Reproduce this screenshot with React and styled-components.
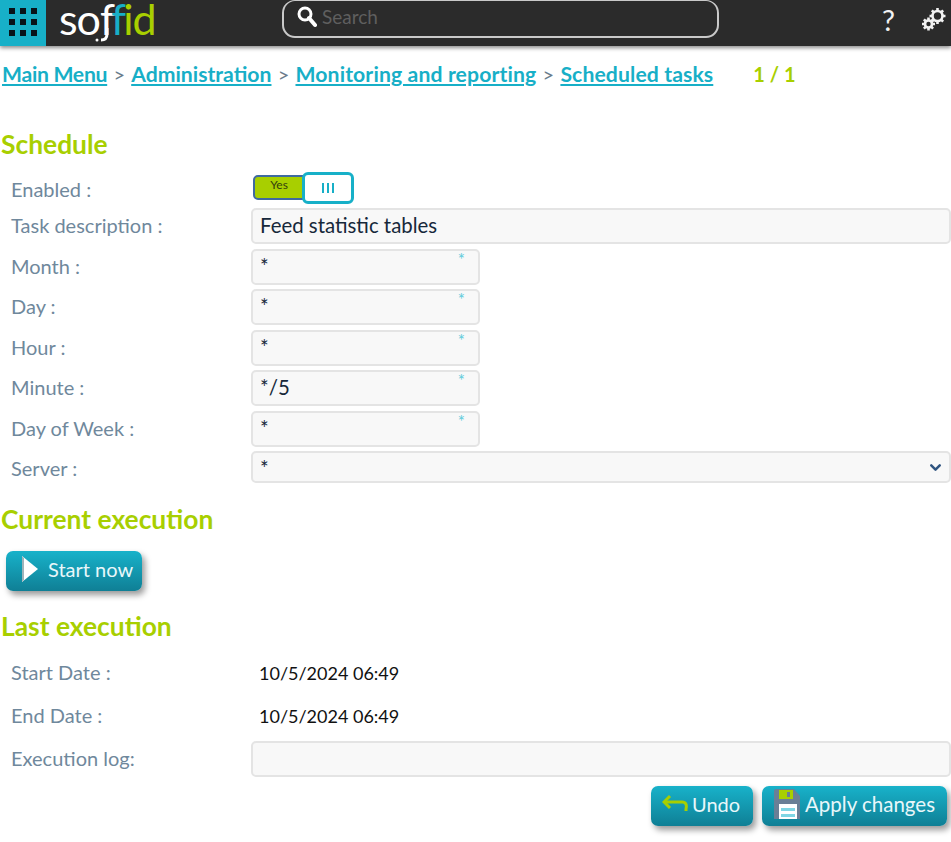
import React from 'react'
import styled, { createGlobalStyle } from 'styled-components'
import { ChevronDown } from 'lucide-react'

const GlobalStyle = createGlobalStyle`
  html, body {
    margin: 0;
    padding: 0;
    background: #fff;
    font-family: 'Lato', 'Open Sans', sans-serif;
  }
  * {
    box-sizing: border-box;
  }
`

const Page = styled.div`
  width: 951px;
  height: 842px;
  overflow: hidden;
`

const Header = styled.header`
  display: flex;
  align-items: flex-start;
  height: 46px;
  background: #2b2b2b;
  box-shadow: 0 2px 4px rgba(0, 0, 0, 0.45);
`

const MenuButton = styled.div`
  display: grid;
  grid-template-columns: repeat(3, 6px);
  grid-auto-rows: 6px;
  gap: 5px;
  align-content: center;
  justify-content: center;
  width: 46px;
  height: 46px;
  padding-bottom: 3px;
  background: #17b0c8;
`

const Dot = styled.span`
  background: #08141a;
`

const Logo = styled.div`
  position: relative;
  display: flex;
  width: 96px;
  height: 46px;
  margin-left: 13px;
  font-size: 43px;
  font-weight: 400;
  line-height: 38px;
`

const LogoPart = styled.span`
  color: ${(p) => p.$color};
  letter-spacing: ${(p) => p.$spacing}px;
`

const LogoHook = styled.svg`
  position: absolute;
  left: 33px;
  top: 28px;
`

const SearchBox = styled.div`
  display: flex;
  align-items: center;
  gap: 5px;
  width: 437px;
  height: 38px;
  margin-left: 127px;
  padding: 0 0 4px 13px;
  border: 2px solid #c9c9c9;
  border-top-width: 1px;
  border-radius: 13px;
  color: #5f5f5f;
  font-size: 19px;
`

const HeaderIcons = styled.div`
  display: flex;
  align-items: center;
  gap: 27px;
  margin-left: auto;
  height: 38px;
  padding-right: 5px;
  color: #f2f2f2;
`

const HelpMark = styled.span`
  font-size: 29px;
  font-weight: 400;
  line-height: 1;
`

const Breadcrumbs = styled.nav`
  display: flex;
  align-items: center;
  height: 24px;
  margin: 16px 0 0 2px;
  font-size: 20px;
  color: #6b7c8c;
  white-space: pre;
`

const Crumb = styled.a`
  color: #17afc7;
  font-size: 21.2px;
  font-weight: 700;
  letter-spacing: ${(p) => p.$spacing}px;
  text-decoration: underline;
`

const Separator = styled.span`
  width: 24px;
  text-align: center;
`

const Counter = styled.span`
  margin-left: 40px;
  color: #a8cf00;
  font-weight: 700;
`

const SectionTitle = styled.h2`
  height: 30px;
  margin: ${(p) => p.$top}px 0 0 1px;
  color: #a8cf00;
  font-size: 26.4px;
  font-weight: 700;
  line-height: 28px;
`

const Form = styled.div`
  display: flex;
  flex-direction: column;
`

const Row = styled.div`
  display: grid;
  grid-template-columns: 251px 1fr;
  align-items: center;
  height: ${(p) => p.$height}px;
  margin-top: ${(p) => p.$top || 0}px;
`

const Label = styled.label`
  padding: ${(p) => (p.$low ? '1px 0 0 11px' : '0 0 2px 11px')};
  color: #6f889c;
  font-size: 20px;
`

const Switch = styled.div`
  display: flex;
  align-items: center;
  align-self: start;
  margin-left: 2px;
`

const SwitchOn = styled.div`
  display: flex;
  justify-content: center;
  width: 52px;
  height: 25px;
  margin-bottom: 1px;
  background: #a8cf00;
  border: 2px solid #3f6aa0;
  border-radius: 5px 0 0 5px;
  color: #34400e;
  font-size: 12px;
`

const SwitchHandle = styled.div`
  display: flex;
  align-items: center;
  justify-content: center;
  gap: 3px;
  width: 52px;
  height: 32px;
  margin-left: -3px;
  background: #fff;
  border: 3px solid #17b0c8;
  border-radius: 6px;
`

const Grip = styled.span`
  width: 2px;
  height: 10px;
  background: #17afc7;
`

const Field = styled.div`
  position: relative;
  width: ${(p) => p.$width || '700px'};
  height: ${(p) => p.$height || 36}px;
  padding: 1px 7px 0;
  background: #f8f8f8;
  border: 2px solid #e4e4e4;
  border-radius: 5px;
  color: #16283a;
  font-size: 20.4px;
  line-height: 28px;
`

const Required = styled.span`
  position: absolute;
  top: 1px;
  right: 13px;
  color: #62cbdb;
  font-size: 17px;
  line-height: 16px;
`

const Chevron = styled(ChevronDown)`
  position: absolute;
  top: 6px;
  right: 5px;
  color: #2f5480;
`

const Value = styled.span`
  padding-left: 8px;
  color: #111;
  font-size: 18px;
`

const Button = styled.button`
  display: flex;
  align-items: center;
  gap: ${(p) => p.$gap}px;
  width: ${(p) => p.$width}px;
  height: 40px;
  padding: 0 0 4px ${(p) => p.$pad}px;
  background: linear-gradient(#18b2ca, #0f7f95);
  border: none;
  border-radius: 7px;
  box-shadow: 3px 4px 6px rgba(0, 0, 0, 0.4);
  color: #e8f7fa;
  font-family: inherit;
  font-size: ${(p) => p.$size || 20}px;
  font-weight: 400;
`

const StartRow = styled.div`
  display: flex;
  margin: 16px 0 0 6px;
`

const Footer = styled.div`
  display: flex;
  justify-content: flex-end;
  gap: 9px;
  margin-top: 9px;
  padding-right: 4px;
`

const PlayIcon = () => (
  <svg width="18" height="26" viewBox="0 0 18 26">
    <path d="M1 0 L17 13 L1 26 Z" fill="#fff" />
    <path d="M1 0 L3 2 L3 24 L1 26 Z" fill="#9fb4ba" />
  </svg>
)

const UndoIcon = () => (
  <svg width="26" height="20" viewBox="0 0 26 20" fill="none" stroke="#a8cf00" strokeWidth="3">
    <path d="M8 2 L2 8 L8 14" />
    <path d="M2 8 H20 C24 8 25 11 24 15 V17" />
  </svg>
)

const SaveIcon = () => (
  <svg width="26" height="30" viewBox="0 0 26 30">
    <path d="M0 2 Q0 0 2 0 H20 L26 7 V30 H0 Z" fill="#6a7f96" />
    <rect x="5" y="1" width="14" height="9" fill="#a8cf00" />
    <rect x="13" y="3" width="3" height="5" fill="#6a7f96" />
    <rect x="5" y="15" width="18" height="15" fill="#fff" />
    <rect x="7" y="19" width="14" height="3" fill="#7fd6e4" />
    <rect x="7" y="25" width="14" height="3" fill="#7fd6e4" />
  </svg>
)

const SearchIcon = () => (
  <svg width="20" height="22" viewBox="0 0 20 22" fill="none" stroke="#fff">
    <circle cx="8" cy="8" r="6" strokeWidth="3" />
    <path d="M12 12 L18 19" strokeWidth="4" strokeLinecap="round" />
  </svg>
)

const Gear = ({ cx, cy, r }) => {
  const teeth = [0, 45, 90, 135]
  return (
    <g stroke="#f2f2f2" fill="none">
      <circle cx={cx} cy={cy} r={r} strokeWidth="2.6" />
      {teeth.map((a) => (
        <path
          key={a}
          d={`M${cx} ${cy - r - 3} V${cy + r + 3}`}
          strokeWidth="2.6"
          strokeDasharray={`3 ${2 * r} 3`}
          transform={`rotate(${a} ${cx} ${cy})`}
        />
      ))}
    </g>
  )
}

const GearsIcon = () => (
  <svg width="24" height="24" viewBox="0 0 24 24">
    <Gear cx={15.5} cy={9} r={5} />
    <Gear cx={6.5} cy={17} r={3.5} />
  </svg>
)

const fields = [
  { label: 'Month :', value: '*', top: 5 },
  { label: 'Day :', value: '*', top: 4 },
  { label: 'Hour :', value: '*', top: 5 },
  { label: 'Minute :', value: '*/5', top: 4 },
  { label: 'Day of Week :', value: '*', top: 5 },
]

const crumbs = [
  { text: 'Main Menu', spacing: -0.3 },
  { text: 'Administration', spacing: 0 },
  { text: 'Monitoring and reporting', spacing: 0.12 },
  { text: 'Scheduled tasks', spacing: 0.1 },
]

export default function App() {
  return (
    <Page>
      <GlobalStyle />
      <Header>
        <MenuButton>
          {Array.from({ length: 9 }).map((_, i) => (
            <Dot key={i} />
          ))}
        </MenuButton>
        <Logo>
          <LogoPart $color="#fff" $spacing={-1}>so</LogoPart>
          <LogoPart $color="#fff" $spacing={-4}>f</LogoPart>
          <LogoPart $color="#17afc7" $spacing={-3}>f</LogoPart>
          <LogoPart $color="#a8cf00" $spacing={-1}>id</LogoPart>
          <LogoHook width="20" height="16" viewBox="0 0 20 16" fill="none">
            <path d="M15 0 V6 C15 10 13 12 9 12" stroke="#fff" strokeWidth="3" />
            <circle cx="5" cy="12" r="1.5" fill="#fff" />
          </LogoHook>
        </Logo>
        <SearchBox>
          <SearchIcon />
          Search
        </SearchBox>
        <HeaderIcons>
          <HelpMark>?</HelpMark>
          <GearsIcon />
        </HeaderIcons>
      </Header>

      <Breadcrumbs>
        {crumbs.map((c, i) => (
          <React.Fragment key={c.text}>
            {i > 0 && <Separator>&gt;</Separator>}
            <Crumb $spacing={c.spacing}>{c.text}</Crumb>
          </React.Fragment>
        ))}
        <Counter>1 / 1</Counter>
      </Breadcrumbs>

      <SectionTitle $top={44}>Schedule</SectionTitle>
      <Form>
        <Row $height={36} $top={12}>
          <Label>Enabled :</Label>
          <Switch>
            <SwitchOn>Yes</SwitchOn>
            <SwitchHandle>
              <Grip />
              <Grip />
              <Grip />
            </SwitchHandle>
          </Switch>
        </Row>
        <Row $height={36}>
          <Label>Task description :</Label>
          <Field>Feed statistic tables</Field>
        </Row>
        {fields.map((f) => (
          <Row key={f.label} $height={36} $top={f.top}>
            <Label>{f.label}</Label>
            <Field $width="229px">
              {f.value}
              <Required>*</Required>
            </Field>
          </Row>
        ))}
        <Row $height={32} $top={4}>
          <Label $low>Server :</Label>
          <Field $height={32}>
            *
            <Chevron size={17} strokeWidth={3.5} />
          </Field>
        </Row>
      </Form>

      <SectionTitle $top={22}>Current execution</SectionTitle>
      <StartRow>
        <Button $gap={9} $pad={15} $width={136}>
          <PlayIcon />
          Start now
        </Button>
      </StartRow>

      <SectionTitle $top={21}>Last execution</SectionTitle>
      <Form>
        <Row $height={43} $top={9}>
          <Label>Start Date :</Label>
          <Value>10/5/2024 06:49</Value>
        </Row>
        <Row $height={43}>
          <Label>End Date :</Label>
          <Value>10/5/2024 06:49</Value>
        </Row>
        <Row $height={36} $top={4}>
          <Label>Execution log:</Label>
          <Field />
        </Row>
      </Form>
      <Footer>
        <Button $gap={4} $pad={11} $width={102}>
          <UndoIcon />
          Undo
        </Button>
        <Button $gap={5} $pad={12} $width={185} $size={20.5}>
          <SaveIcon />
          Apply changes
        </Button>
      </Footer>
    </Page>
  )
}
